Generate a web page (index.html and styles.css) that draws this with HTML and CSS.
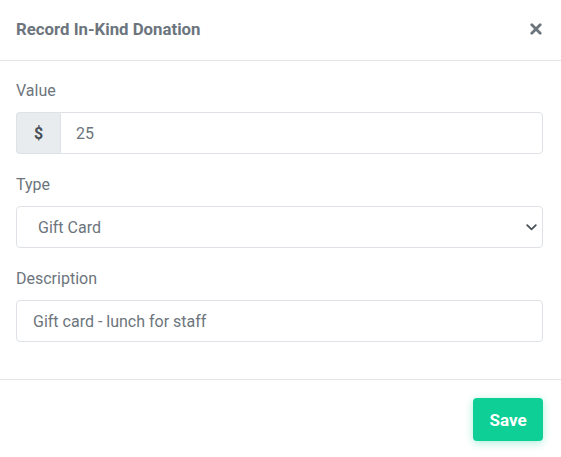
FILE: index.html
```html
<!DOCTYPE html>
<html lang="en">
<head>
<meta charset="utf-8">
<title>Record In-Kind Donation</title>
<link rel="stylesheet" href="styles.css">
</head>
<body>
<div class="modal">
  <div class="modal-header">
    <h5 class="modal-title">Record In-Kind Donation</h5>
    <button class="close" type="button" aria-label="Close">
      <svg width="12" height="12" viewBox="0 0 12 12"><path d="M1.8 1.8 L10.2 10.2 M10.2 1.8 L1.8 10.2" stroke="#6c757d" stroke-width="2.8" stroke-linecap="round"/></svg>
    </button>
  </div>
  <div class="modal-body">
    <div class="form-group">
      <label class="form-label">Value</label>
      <div class="input-group">
        <span class="addon">$</span>
        <input class="control control-grouped" type="text" value="25">
      </div>
    </div>
    <div class="form-group">
      <label class="form-label">Type</label>
      <div class="select-wrap">
        <select class="control select">
          <option>Gift Card</option>
        </select>
        <svg class="chevron" width="11" height="7" viewBox="0 0 11 7"><path d="M1.2 1.2 L5.5 5.3 L9.8 1.2" fill="none" stroke="#495057" stroke-width="1.8" stroke-linecap="round" stroke-linejoin="round"/></svg>
      </div>
    </div>
    <div class="form-group">
      <label class="form-label">Description</label>
      <input class="control" type="text" value="Gift card - lunch for staff">
    </div>
  </div>
  <div class="modal-footer">
    <button class="btn-save" type="button">Save</button>
  </div>
</div>
</body>
</html>
```
FILE: styles.css
```css
* { box-sizing: border-box; }
html, body {
  margin: 0;
  padding: 0;
  background: #fff;
}
body {
  font-family: Roboto, "Liberation Sans", Arial, sans-serif;
  color: #6c757d;
  width: 561px;
  height: 457px;
  overflow: hidden;
}
.modal {
  display: flex;
  flex-direction: column;
}
.modal-header {
  height: 61px;
  border-bottom: 1px solid #e3e5e8;
  display: flex;
  align-items: center;
  justify-content: space-between;
  padding: 0 19px 2px 16px;
}
.modal-title {
  margin: 0;
  font-size: 16.8px;
  font-weight: 700;
  color: #6c757d;
  line-height: 24px;
}
.close {
  border: 0;
  background: transparent;
  padding: 0;
  width: 12px;
  height: 12px;
  display: flex;
  align-items: center;
  justify-content: center;
}
.modal-body {
  padding: 19px 18px 17px 16px;
}
.form-group {
  margin-bottom: 20px;
}
.form-label {
  display: block;
  font-size: 16px;
  line-height: 22px;
  margin-bottom: 10px;
  color: #6c757d;
}
.input-group {
  display: flex;
}
.addon {
  width: 44px;
  height: 42px;
  display: flex;
  align-items: center;
  justify-content: center;
  background: #e9ecef;
  border: 1px solid #dee2e6;
  border-right: 0;
  border-radius: 4px 0 0 4px;
  font-size: 16px;
  font-weight: 700;
  color: #495057;
}
.control {
  display: block;
  width: 100%;
  height: 42px;
  border: 1px solid #dee2e6;
  border-radius: 4px;
  background: #fff;
  font-family: inherit;
  font-size: 16px;
  color: #6c757d;
  padding: 0 16px;
  outline: none;
}
.control-grouped {
  flex: 1;
  border-radius: 0 4px 4px 0;
  padding-left: 15px;
}
.select-wrap {
  position: relative;
}
.select {
  appearance: none;
  -webkit-appearance: none;
  padding-left: 21px;
}
.chevron {
  position: absolute;
  right: 6px;
  top: 18px;
  pointer-events: none;
}
.modal-footer {
  border-top: 1px solid #e3e5e8;
  padding: 18px 18px 16px 16px;
  display: flex;
  justify-content: flex-end;
}
.btn-save {
  width: 70px;
  height: 43px;
  border: 0;
  border-radius: 4px;
  background: #0ecf96;
  color: #fff;
  font-family: inherit;
  font-size: 17px;
  font-weight: 700;
  box-shadow: 0 2px 8px rgba(14, 207, 150, 0.35);
}
```
